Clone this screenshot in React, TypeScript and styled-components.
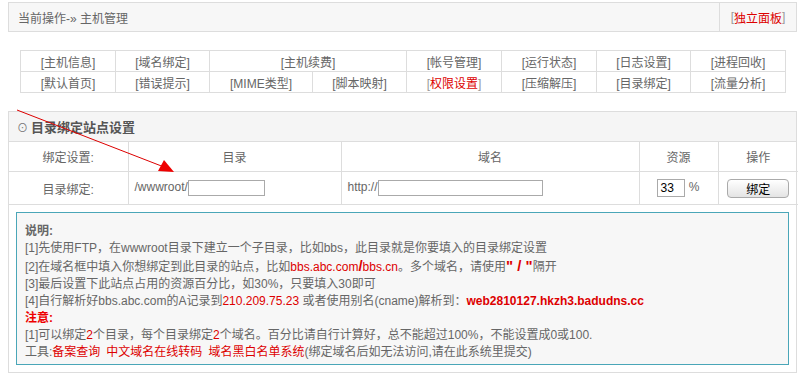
import { FunctionComponent } from "react";
import styled, { createGlobalStyle } from "styled-components";

const GlobalStyle = createGlobalStyle`
  html, body {
    margin: 0;
    padding: 0;
    background: #fff;
  }
  body {
    font-family: "Liberation Sans", "Noto Sans CJK SC", sans-serif;
    font-size: 12px;
    color: #666;
  }
`;

const Page = styled.div`
  position: relative;
  width: 789px;
  padding: 2px 1px 0 8px;
`;

const TopBar = styled.div`
  display: flex;
  height: 28px;
  border: 1px solid #ddd;
  background: #f7f7f7;
`;
const Crumb = styled.div`
  flex: 1;
  display: flex;
  align-items: center;
  padding-left: 9px;
  color: #666;
`;
const PanelLinkCell = styled.div`
  width: 76px;
  border-left: 1px solid #ddd;
  display: flex;
  align-items: center;
  justify-content: center;
`;
const Bracket = styled.span`
  color: #999;
`;
const RedLink = styled.span<{ $bold?: boolean; $size?: number }>`
  color: #d00;
  font-weight: ${(p) => (p.$bold ? 700 : 400)};
  font-size: ${(p) => (p.$size ? `${p.$size}px` : "inherit")};
`;
const ToolLink = styled.span`
  color: #d00;
  margin-right: 6px;
`;

const NavTable = styled.table`
  margin: 18px 12px;
  width: 765px;
  border-collapse: collapse;
  table-layout: fixed;
`;
const NavCell = styled.td`
  border: 1px solid #ddd;
  height: 20px;
  padding: 0;
  text-align: center;
  color: #666;
`;

const Panel = styled.div`
  border: 1px solid #ddd;
  background: #fff;
`;
const PanelTitle = styled.div`
  height: 29px;
  display: flex;
  align-items: center;
  gap: 3px;
  padding-left: 8px;
  background: #f5f5f5;
  border-bottom: 1px solid #ddd;
  font-size: 13px;
  font-weight: 700;
  color: #555;
`;
const TitleIcon = styled.span`
  font-size: 11px;
  font-weight: 400;
  color: #777;
`;
const BindTable = styled.table`
  width: 100%;
  border-collapse: collapse;
  table-layout: fixed;
`;
const BindCell = styled.td<{ $align?: string; $h?: number }>`
  border-left: 1px solid #ddd;
  border-bottom: 1px solid #ddd;
  height: ${(p) => p.$h ?? 29}px;
  padding: 0 0 0 ${(p) => (p.$align === "left" ? "6px" : "0")};
  text-align: ${(p) => p.$align ?? "center"};
  color: #666;
  white-space: nowrap;
  &:first-child {
    border-left: none;
  }
`;
const TextBox = styled.input<{ $w: number }>`
  width: ${(p) => p.$w}px;
  height: 16px;
  box-sizing: border-box;
  border: 1px solid #aaa;
  padding: 0 2px;
  font: inherit;
  font-size: 12px;
  color: #000;
  vertical-align: middle;
  outline: none;
`;
const BindButton = styled.button`
  width: 62px;
  height: 19px;
  border: 1px solid #aaa;
  border-radius: 4px;
  background: linear-gradient(#ffffff, #e4e4e4);
  font: inherit;
  font-size: 12px;
  color: #000;
  padding: 0;
  cursor: pointer;
`;

const Note = styled.div`
  margin: 7px;
  border: 1px solid #4aa6b8;
  background: #f7f7f7;
  padding: 10px 8px 3px;
  line-height: 17px;
  color: #666;
`;
const NoteHead = styled.div<{ $red?: boolean }>`
  font-weight: 700;
  color: ${(p) => (p.$red ? "#e00" : "#666")};
`;
const Arrow = styled.svg`
  position: absolute;
  left: 0;
  top: 0;
  pointer-events: none;
`;

const navRow1: { label: string; span?: number }[] = [
  { label: "主机信息" },
  { label: "域名绑定" },
  { label: "主机续费", span: 2 },
  { label: "帐号管理" },
  { label: "运行状态" },
  { label: "日志设置" },
  { label: "进程回收" },
];
const navRow2 = ["默认首页", "错误提示", "MIME类型", "脚本映射", "权限设置", "压缩解压", "目录绑定", "流量分析"];
const colWidths = [95, 94, 103, 94, 95, 95, 94, 95];

const NavLabel: FunctionComponent<{ label: string }> = ({ label }) =>
  label === "权限设置" ? (
    <>
      <Bracket>[</Bracket>
      <RedLink>{label}</RedLink>
      <Bracket>]</Bracket>
    </>
  ) : (
    <>[{label}]</>
  );

const App: FunctionComponent = () => {
  return (
    <Page>
      <GlobalStyle />
      <TopBar>
        <Crumb>当前操作-» 主机管理</Crumb>
        <PanelLinkCell>
          <Bracket>[</Bracket>
          <RedLink>独立面板</RedLink>
          <Bracket>]</Bracket>
        </PanelLinkCell>
      </TopBar>

      <NavTable>
        <colgroup>
          {colWidths.map((w, i) => (
            <col key={i} style={{ width: w }} />
          ))}
        </colgroup>
        <tbody>
          <tr>
            {navRow1.map((n) => (
              <NavCell key={n.label} colSpan={n.span}>
                <NavLabel label={n.label} />
              </NavCell>
            ))}
          </tr>
          <tr>
            {navRow2.map((l) => (
              <NavCell key={l}>
                <NavLabel label={l} />
              </NavCell>
            ))}
          </tr>
        </tbody>
      </NavTable>

      <Panel>
        <PanelTitle>
          <TitleIcon>⊙</TitleIcon>目录绑定站点设置
        </PanelTitle>
        <BindTable>
          <colgroup>
            <col style={{ width: 119 }} />
            <col style={{ width: 213 }} />
            <col style={{ width: 298 }} />
            <col style={{ width: 79 }} />
            <col style={{ width: 80 }} />
          </colgroup>
          <tbody>
            <tr>
              <BindCell>绑定设置:</BindCell>
              <BindCell>目录</BindCell>
              <BindCell>域名</BindCell>
              <BindCell>资源</BindCell>
              <BindCell>操作</BindCell>
            </tr>
            <tr>
              <BindCell $h={32}>目录绑定:</BindCell>
              <BindCell $h={32} $align="left">
                /wwwroot/<TextBox $w={77} defaultValue="" />
              </BindCell>
              <BindCell $h={32} $align="left">
                http://<TextBox $w={165} defaultValue="" />
              </BindCell>
              <BindCell $h={32}>
                <TextBox $w={28} defaultValue="33" style={{ height: 18 }} /> %
              </BindCell>
              <BindCell $h={32}>
                <BindButton>绑定</BindButton>
              </BindCell>
            </tr>
          </tbody>
        </BindTable>

        <Note>
          <NoteHead>说明:</NoteHead>
          <div>[1]先使用FTP，在wwwroot目录下建立一个子目录，比如bbs，此目录就是你要填入的目录绑定设置</div>
          <div>
            [2]在域名框中填入你想绑定到此目录的站点，比如<RedLink>bbs.abc.com</RedLink>
            <RedLink $bold $size={15}>/</RedLink>
            <RedLink>bbs.cn</RedLink>。多个域名，请使用
            <RedLink $bold $size={15}>" / "</RedLink>隔开
          </div>
          <div>[3]最后设置下此站点占用的资源百分比，如30%，只要填入30即可</div>
          <div>
            [4]自行解析好bbs.abc.com的A记录到<RedLink>210.209.75.23</RedLink> 或者使用别名(cname)解析到：
            <RedLink $bold>web2810127.hkzh3.badudns.cc</RedLink>
          </div>
          <NoteHead $red>注意:</NoteHead>
          <div>
            [1]可以绑定<RedLink>2</RedLink>个目录，每个目录绑定<RedLink>2</RedLink>个域名。百分比请自行计算好，总不能超过100%，不能设置成0或100.
          </div>
          <div>
            工具:<ToolLink>备案查询</ToolLink>
            <ToolLink>中文域名在线转码</ToolLink>
            <RedLink>域名黑白名单系统</RedLink>(绑定域名后如无法访问,请在此系统里提交)
          </div>
        </Note>
      </Panel>

      <Arrow width="200" height="190" viewBox="0 0 200 190">
        <line x1="17" y1="110" x2="164" y2="167" stroke="#d00" strokeWidth="1" />
        <polygon points="174,172 158,171 164,160" fill="#e00" />
      </Arrow>
    </Page>
  );
};

export default App;
